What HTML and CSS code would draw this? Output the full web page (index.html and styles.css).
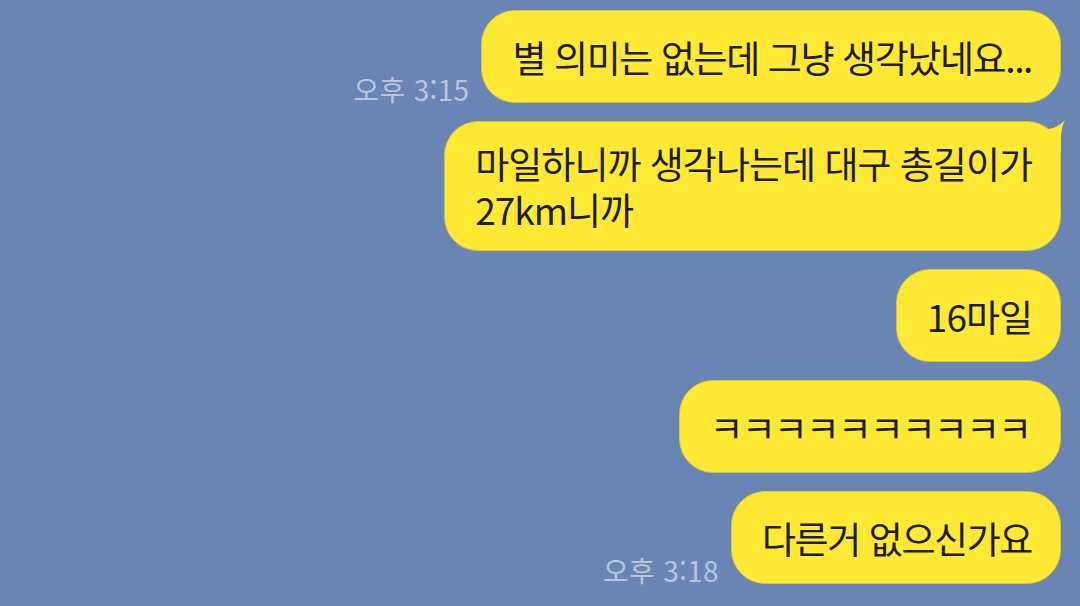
FILE: index.html
```html
<!DOCTYPE html>
<html lang="ko">
<head>
<meta charset="utf-8">
<link rel="stylesheet" href="styles.css">
</head>
<body>
<div class="chat">
  <div class="row">
    <span class="time">오후 3:15</span>
    <div class="bubble tight">별 의미는 없는데 그냥 생각났네요...</div>
  </div>
  <div class="row">
    <div class="bubble">
      <span>마일하니까 생각나는데 대구 총길이가<br>27km니까</span>
      <svg class="tail" width="26" height="32" viewBox="0 0 26 32"><path d="M3 9 C 11 10, 18 7, 25 0 C 22 6, 21 12, 21 22 L 21 32 L 3 32 Z" fill="#ffe934"/></svg>
    </div>
  </div>
  <div class="row">
    <div class="bubble">16마일</div>
  </div>
  <div class="row">
    <div class="bubble jamo">ㅋㅋㅋㅋㅋㅋㅋㅋㅋㅋ</div>
  </div>
  <div class="row">
    <span class="time">오후 3:18</span>
    <div class="bubble tight">다른거 없으신가요</div>
  </div>
</div>
</body>
</html>
```
FILE: styles.css
```css
html, body {
  margin: 0;
  padding: 0;
  width: 1080px;
  height: 606px;
  overflow: hidden;
  background: #6985b3;
}
.chat {
  display: flex;
  flex-direction: column;
  align-items: flex-end;
  gap: 18px;
  padding: 10px 19px 0 0;
  font-family: "Noto Sans CJK KR", "Noto Sans", sans-serif;
}
.row {
  display: flex;
  align-items: flex-end;
  gap: 12px;
}
.time {
  font-size: 28px;
  line-height: 28px;
  color: #b7c6de;
  margin-bottom: 0;
  letter-spacing: 0.3px;
}
.bubble {
  position: relative;
  box-sizing: border-box;
  min-height: 93px;
  display: flex;
  align-items: center;
  background: #ffe934;
  border: 1px solid #d6c43c;
  color: #1d1d1d;
  font-size: 37px;
  line-height: 46px;
  padding: 18px 28px 18px 30px;
  border-radius: 34px;
  letter-spacing: -1px;
  white-space: nowrap;
}
.bubble.tight {
  letter-spacing: -1.4px;
}
.bubble.jamo {
  letter-spacing: -2px;
  padding-right: 30px;
}
.tail {
  position: absolute;
  top: -2px;
  right: -6px;
}
```
